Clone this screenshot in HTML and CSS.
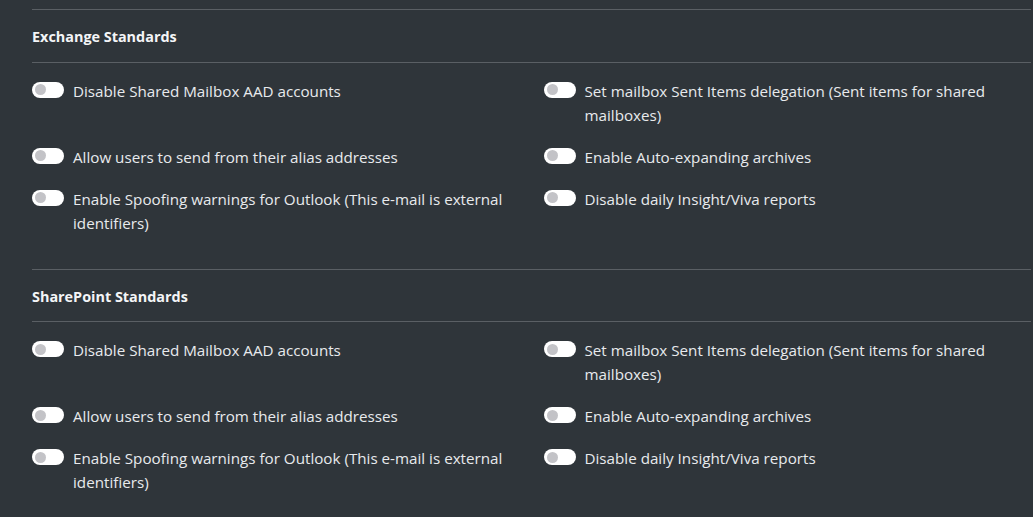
FILE: index.html
```html
<!DOCTYPE html>
<html>
<head>
<meta charset="utf-8">
<link rel="stylesheet" href="styles.css">
</head>
<body>
<div class="page">
  <section class="std">
    <h5 class="std-title">Exchange Standards</h5>
    <div class="grid">
      <label class="item"><span class="switch"></span><span class="txt">Disable Shared Mailbox AAD accounts</span></label>
      <label class="item"><span class="switch"></span><span class="txt">Set mailbox Sent Items delegation (Sent items for shared mailboxes)</span></label>
      <label class="item"><span class="switch"></span><span class="txt">Allow users to send from their alias addresses</span></label>
      <label class="item"><span class="switch"></span><span class="txt">Enable Auto-expanding archives</span></label>
      <label class="item"><span class="switch"></span><span class="txt">Enable Spoofing warnings for Outlook (This e-mail is external identifiers)</span></label>
      <label class="item"><span class="switch"></span><span class="txt">Disable daily Insight/Viva reports</span></label>
    </div>
  </section>
  <section class="std">
    <h5 class="std-title">SharePoint Standards</h5>
    <div class="grid">
      <label class="item"><span class="switch"></span><span class="txt">Disable Shared Mailbox AAD accounts</span></label>
      <label class="item"><span class="switch"></span><span class="txt">Set mailbox Sent Items delegation (Sent items for shared mailboxes)</span></label>
      <label class="item"><span class="switch"></span><span class="txt">Allow users to send from their alias addresses</span></label>
      <label class="item"><span class="switch"></span><span class="txt">Enable Auto-expanding archives</span></label>
      <label class="item"><span class="switch"></span><span class="txt">Enable Spoofing warnings for Outlook (This e-mail is external identifiers)</span></label>
      <label class="item"><span class="switch"></span><span class="txt">Disable daily Insight/Viva reports</span></label>
    </div>
  </section>
</div>
</body>
</html>
```
FILE: styles.css
```css
html, body {
  margin: 0;
  padding: 0;
  background: #2f353a;
}
body {
  font-family: "Open Sans", "Noto Sans", sans-serif;
  color: #e8eaed;
  font-size: 15.2px;
  line-height: 24px;
}
.page {
  padding: 9px 2px 0 32px;
}
.std {
  border-top: 1px solid #5a5f64;
  padding-bottom: 16px;
}
.std-title {
  margin: 0;
  padding: 15px 0 12.5px;
  font-size: 14.4px;
  font-weight: 700;
  color: #f4f5f7;
  border-bottom: 1px solid #5a5f64;
}
.grid {
  display: grid;
  grid-template-columns: 1fr 1fr;
  column-gap: 24px;
  padding-top: 16px;
}
.item {
  display: flex;
  align-items: flex-start;
  gap: 9px;
  margin-bottom: 18px;
}
.switch {
  flex: none;
  position: relative;
  width: 32px;
  height: 16px;
  margin-top: 3px;
  border-radius: 8px;
  background: #ffffff;
}
.switch::after {
  content: "";
  position: absolute;
  left: 3px;
  top: 2.5px;
  width: 11px;
  height: 11px;
  border-radius: 50%;
  background: #c3c3c7;
}
.txt {
  flex: 1;
}
```
